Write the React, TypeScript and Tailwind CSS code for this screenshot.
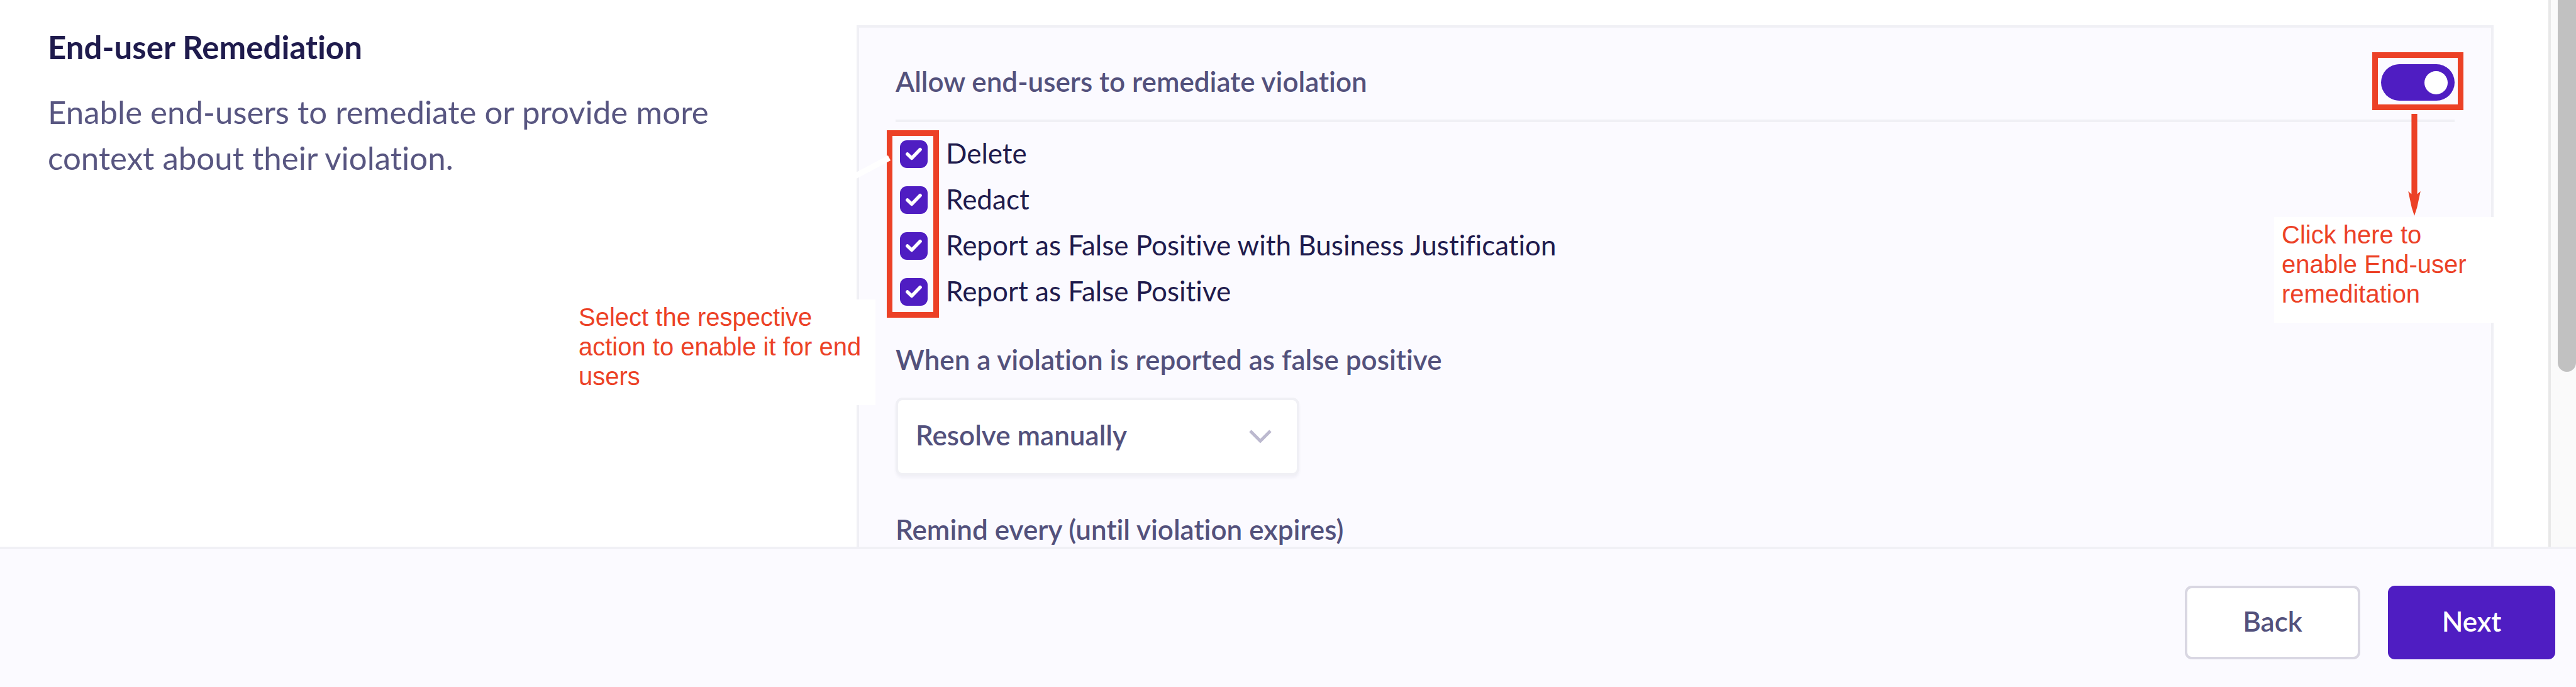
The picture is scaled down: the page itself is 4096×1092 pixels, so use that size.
import { useState } from "react";

const ACTIONS = [
  "Delete",
  "Redact",
  "Report as False Positive with Business Justification",
  "Report as False Positive",
];

function ActionCheckbox({ label }: { label: string }) {
  const [checked, setChecked] = useState(true);
  return (
    <label className="flex h-11 items-start gap-[29px] text-[44px] leading-[40px] text-[#1f1b4d]">
      <span className="grid size-11 shrink-0">
        <input
          type="checkbox"
          checked={checked}
          onChange={(e) => setChecked(e.target.checked)}
          className="col-start-1 row-start-1 size-11 appearance-none rounded-[11px] border-4 border-[#4f1dc2] bg-white checked:bg-[#4f1dc2]"
        />
        <svg viewBox="0 0 48 48" className="pointer-events-none col-start-1 row-start-1 size-11" aria-hidden="true">
          <path
            d="M13 24l7.5 7L35 16"
            fill="none"
            stroke="white"
            strokeWidth="6"
            strokeLinecap="round"
            strokeLinejoin="round"
          />
        </svg>
      </span>
      {label}
    </label>
  );
}

function RemediationToggle() {
  const [on, setOn] = useState(true);
  return (
    <div className="relative">
      <button
        type="button"
        role="switch"
        aria-checked={on}
        aria-labelledby="allow-label"
        onClick={() => setOn(!on)}
        className={
          on
            ? "flex h-[58px] w-[117px] items-center justify-end rounded-full bg-[#4f1dc2] px-[11px]"
            : "flex h-[58px] w-[117px] items-center justify-start rounded-full bg-[#bcb9cf] px-[11px]"
        }
      >
        <span className="size-[37px] rounded-full bg-white" />
      </button>
      <div className="pointer-events-none absolute -top-[19px] -left-[14px] h-[92px] w-[145px] border-[9px] border-[#ec4126]" />
      <svg
        viewBox="0 0 20 162"
        className="pointer-events-none absolute top-[79px] left-[43px] h-[162px] w-5"
        aria-hidden="true"
      >
        <path d="M5.4 0h9.2v127.5l5.2-4.5L14.2 149 10 162 5.8 149 .2 123l5.2 4.5z" fill="#ec4126" />
      </svg>
      <Callout className="absolute top-[243px] -left-[170px] w-[350px]">
        Click here to enable End-user remeditation
      </Callout>
    </div>
  );
}

function Callout({ className, children }: { className: string; children: string }) {
  return (
    <p
      className={`h-[168px] bg-white px-3 pt-[5px] font-['Liberation_Sans',sans-serif] text-[40px] leading-[47px] font-normal text-[#ec4126] ${className}`}
    >
      {children}
    </p>
  );
}

export default function App() {
  return (
    <div className="flex h-screen flex-col overflow-hidden bg-white font-['Lato',sans-serif] [font-variant-ligatures:none]">
      <main className="flex min-h-0 flex-1 overflow-hidden">
        <section className="w-[1362px] shrink-0 pt-[45px] pr-[170px] pl-[76px]">
          <h2 className="text-[51px] leading-[60px] font-bold text-[#1f1b4d]">End-user Remediation</h2>
          <p className="mt-9 text-[51px] leading-[73px] text-[#585681]">
            Enable end-users to remediate or provide more context about their violation.
          </p>
        </section>

        <section className="relative mt-10 mr-[87px] min-w-0 flex-1 border-4 border-b-0 border-[#f0f0f5] bg-[#fbfaff] px-[58px] pt-[58px] text-[44px] leading-[54px] font-semibold text-[#53517c]">
          <div className="flex items-start justify-between border-b-4 border-[#f0f0f5] pb-[30px]">
            <h3 id="allow-label">Allow end-users to remediate violation</h3>
            <RemediationToggle />
          </div>

          <div className="relative mt-[29px] flex flex-col gap-[29px] pl-[7px] font-normal">
            {ACTIONS.map((label) => (
              <ActionCheckbox key={label} label={label} />
            ))}
            <div className="pointer-events-none absolute -top-4 -left-[14px] h-[298px] w-[83px] border-[9px] border-[#ec4126]" />
            <svg
              viewBox="0 0 60 50"
              className="pointer-events-none absolute top-[14px] -left-[66px] h-[50px] w-[60px]"
              aria-hidden="true"
            >
              <path d="M-4 46L56 14" stroke="white" strokeWidth="9" />
            </svg>
          </div>

          <Callout className="absolute top-[432px] -left-[458px] w-[484px]">
            Select the respective action to enable it for end users
          </Callout>

          <label htmlFor="resolution" className="mt-[58px] block">
            When a violation is reported as false positive
          </label>
          <div className="mt-[34px] grid w-[642px]">
            <select
              id="resolution"
              className="col-start-1 row-start-1 h-[124px] appearance-none rounded-[11px] border-4 border-[#f0f0f5] bg-white px-7 pb-1.5 shadow-[0_4px_4px_rgba(31,27,77,0.04)]"
            >
              <option>Resolve manually</option>
            </select>
            <svg
              viewBox="0 0 36 22"
              className="pointer-events-none col-start-1 row-start-1 mr-[44px] h-[22px] w-9 self-center justify-self-end"
              aria-hidden="true"
            >
              <path d="M2 2l16 16L34 2" fill="none" stroke="#bcb9cf" strokeWidth="5" />
            </svg>
          </div>

          <h3 className="mt-[58px]">Remind every (until violation expires)</h3>
        </section>

        <div className="flex w-11 shrink-0 justify-end border-l-4 border-[#e8e8e8] bg-[#fafafa]" aria-hidden="true">
          <div className="h-[591px] w-[29px] rounded-b-[15px] bg-[#c1c1c1]" />
        </div>
      </main>

      <footer className="flex shrink-0 justify-end gap-11 border-t-4 border-[#f0f0f5] bg-[#fbfaff] pt-[58px] pr-[33px] pb-11 text-[44px] leading-[54px] font-semibold">
        <button
          type="button"
          className="h-[117px] w-[279px] rounded-[11px] border-4 border-[#d9d7e2] bg-white pb-1.5 text-[#53517c]"
        >
          Back
        </button>
        <button type="button" className="h-[117px] w-[266px] rounded-[11px] bg-[#4f1dc2] pb-1.5 text-white">
          Next
        </button>
      </footer>
    </div>
  );
}
